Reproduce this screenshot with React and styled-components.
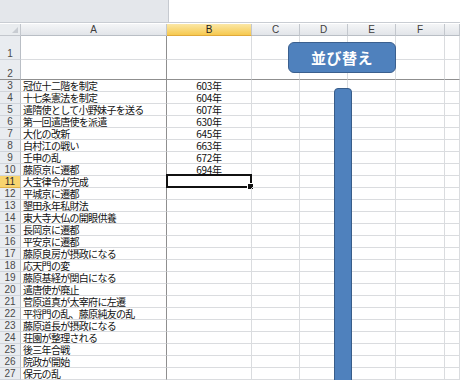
import React from 'react';
import styled, { createGlobalStyle, css } from 'styled-components';

const GlobalStyle = createGlobalStyle`
  body {
    margin: 0;
    background: #ffffff;
    font-family: 'Noto Sans CJK JP', 'Liberation Sans', sans-serif;
  }
`;

const COLS = ['A', 'B', 'C', 'D', 'E', 'F', ''];
const WIDTHS = '21px 146px 85px 48px 48px 48px 49px 1fr';

const events = [
  ['冠位十二階を制定', '603年'],
  ['十七条憲法を制定', '604年'],
  ['遣隋使として小野妹子を送る', '607年'],
  ['第一回遣唐使を派遣', '630年'],
  ['大化の改新', '645年'],
  ['白村江の戦い', '663年'],
  ['壬申の乱', '672年'],
  ['藤原京に遷都', '694年'],
  ['大宝律令が完成', ''],
  ['平城京に遷都', ''],
  ['墾田永年私財法', ''],
  ['東大寺大仏の開眼供養', ''],
  ['長岡京に遷都', ''],
  ['平安京に遷都', ''],
  ['藤原良房が摂政になる', ''],
  ['応天門の変', ''],
  ['藤原基経が関白になる', ''],
  ['遣唐使が廃止', ''],
  ['菅原道真が太宰府に左遷', ''],
  ['平将門の乱、藤原純友の乱', ''],
  ['藤原道長が摂政になる', ''],
  ['荘園が整理される', ''],
  ['後三年合戦', ''],
  ['院政が開始', ''],
  ['保元の乱', ''],
];

const Page = styled.div`
  width: 460px;
  height: 380px;
  overflow: hidden;
  background: #ffffff;
`;

const TopBar = styled.div`
  display: flex;
  height: 22px;
  border-bottom: 1px solid #c9cdd3;
  margin-bottom: 1px;
`;

const NameArea = styled.div`
  width: 168px;
  background: #e4e7eb;
  border-right: 1px solid #c6cad0;
`;

const FormulaArea = styled.div`
  flex: 1;
  background: #ffffff;
`;

const Sheet = styled.div`
  position: relative;
  display: grid;
  grid-template-columns: ${WIDTHS};
  grid-template-rows: 12px 24px 20px;
  grid-auto-rows: 12px;
  color: #111;
`;

const Corner = styled.div`
  position: relative;
  background: #e9ecef;
  border-right: 1px solid #c3c7cd;
  border-bottom: 1px solid #c3c7cd;
  &::after {
    content: '';
    position: absolute;
    right: 2px;
    bottom: 2px;
    border-left: 6px solid transparent;
    border-bottom: 6px solid #c8ccd2;
  }
`;

const ColHead = styled.div`
  display: flex;
  align-items: center;
  justify-content: center;
  font-family: 'Liberation Sans', sans-serif;
  font-size: 10px;
  line-height: 12px;
  color: #3d3d3d;
  background: linear-gradient(#f4f5f7, #e2e5e9);
  border-right: 1px solid #c3c7cd;
  border-bottom: 1px solid #b9bec5;
  ${(p) =>
    p.$active &&
    css`
      background: linear-gradient(#fbe7a6, #f6c94f);
      border-bottom-color: #e0a93a;
      color: #222;
    `}
`;

const RowHead = styled.div`
  display: flex;
  align-items: flex-end;
  justify-content: center;
  font-family: 'Liberation Sans', sans-serif;
  font-size: 10px;
  line-height: 11px;
  color: #4a4a4a;
  background: #e9ecf0;
  border-right: 1px solid #b9bec5;
  border-bottom: 1px solid ${(p) => (p.$freeze ? '#8f8f8f' : '#d0d4da')};
  ${(p) =>
    p.$active &&
    css`
      background: #f8d46f;
      color: #2a2a2a;
      border-bottom-color: #e0b24a;
    `}
`;

const Cell = styled.div`
  position: relative;
  display: flex;
  align-items: flex-end;
  justify-content: ${(p) => (p.$center ? 'center' : 'flex-start')};
  padding-left: ${(p) => (p.$center ? '0' : '2px')};
  white-space: nowrap;
  min-width: 0;
  font-size: 10px;
  line-height: 11px;
  letter-spacing: -0.7px;
  border-right: 1px solid ${(p) => (p.$freezeRight ? '#8f8f8f' : '#dadcdf')};
  border-bottom: 1px solid ${(p) => (p.$freeze ? '#8f8f8f' : '#dadcdf')};
  ${(p) => p.$center && css`letter-spacing: -0.3px;`}
`;

const Selection = styled.div`
  position: absolute;
  inset: -2px -1px -1px -1px;
  border: 2px solid #111;
  pointer-events: none;
  &::after {
    content: '';
    position: absolute;
    right: -4px;
    bottom: -4px;
    width: 5px;
    height: 5px;
    background: #111;
    border: 1px solid #fff;
  }
`;

const SortButton = styled.div`
  position: absolute;
  left: 288px;
  top: 18px;
  width: 108px;
  height: 31px;
  box-sizing: border-box;
  display: flex;
  align-items: center;
  justify-content: center;
  background: #4f81bd;
  border: 1.5px solid #3a5f8e;
  border-radius: 6px;
  color: #ffffff;
  font-size: 15px;
  font-weight: 700;
  letter-spacing: 0.5px;
`;

const Bar = styled.div`
  position: absolute;
  left: 334px;
  top: 64px;
  width: 18px;
  height: 320px;
  box-sizing: border-box;
  background: #4f81bd;
  border: 1.5px solid #385d8a;
  border-radius: 4px 4px 0 0;
`;

function DataRow({ num, label, year, active, freeze }) {
  return (
    <>
      <RowHead $active={active} $freeze={freeze}>{num}</RowHead>
      <Cell $freeze={freeze} $freezeRight>{label}</Cell>
      <Cell $freeze={freeze} $center>
        {year}
        {active && <Selection />}
      </Cell>
      {COLS.slice(2).map((c, i) => (
        <Cell key={i} $freeze={freeze} />
      ))}
    </>
  );
}

export default function App() {
  return (
    <Page>
      <GlobalStyle />
      <TopBar>
        <NameArea />
        <FormulaArea />
      </TopBar>
      <Sheet>
        <Corner />
        {COLS.map((c, i) => (
          <ColHead key={i} $active={c === 'B'}>{c}</ColHead>
        ))}
        <DataRow num="1" label="" year="" />
        <DataRow num="2" label="" year="" freeze />
        {events.map(([label, year], i) => (
          <DataRow
            key={i}
            num={String(i + 3)}
            label={label}
            year={year}
            active={i + 3 === 11}
          />
        ))}
        <SortButton>並び替え</SortButton>
        <Bar />
      </Sheet>
    </Page>
  );
}
